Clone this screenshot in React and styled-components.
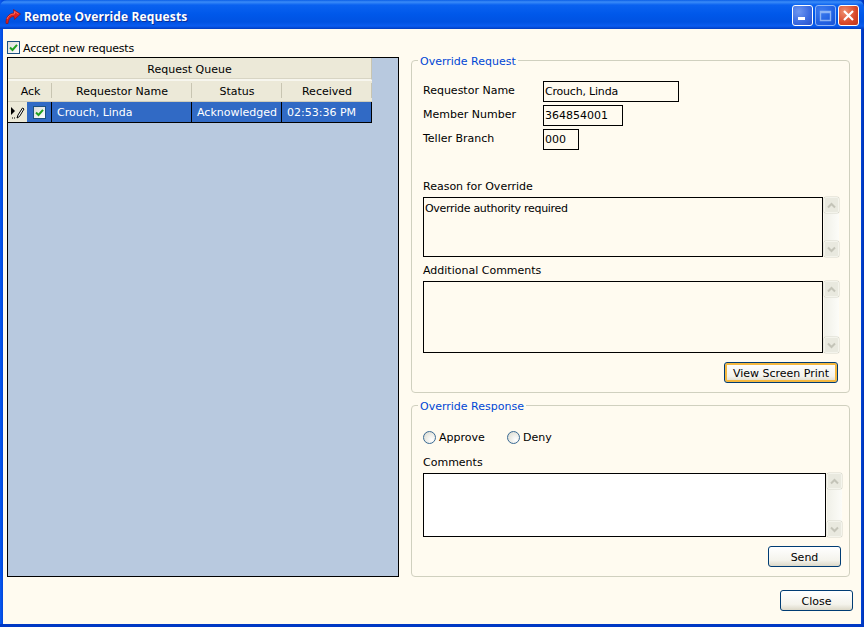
import React from "react";
import styled, { createGlobalStyle } from "styled-components";

const Global = createGlobalStyle`
  html, body { margin: 0; padding: 0; background: #0a4be0; }
  body { font-family: "DejaVu Sans", "Liberation Sans", sans-serif; font-size: 11px; color: #000; }
  * { box-sizing: border-box; }
`;

const Window = styled.div`
  width: 864px; height: 627px; display: flex; flex-direction: column; overflow: hidden;
  background: linear-gradient(90deg, #0a5af0 0, #0046dc 3px, #0046dc 861px, #0030b0 864px);
  border-bottom: 3px solid #0038c4;
`;
const TitleBar = styled.div`
  height: 29px; flex: none; display: flex; align-items: center; padding: 2px 5px 0 5px;
  border-radius: 7px 7px 0 0;
  background: linear-gradient(180deg, #0a5ee6 0, #3b8cf8 2px, #0a62f0 5px, #0058ea 14px, #0052e2 22px, #0a5cf0 26px, #003cc0 29px);
`;
const TitleText = styled.div`
  flex: 1; margin: 1px 0 0 3px; color: #fff; font-family: "Open Sans", "Liberation Sans", sans-serif;
  font-weight: 700; font-size: 12px; letter-spacing: 0.13px; text-shadow: 1px 1px 0 #0a2f9a;
`;
const CaptionButtons = styled.div`
  display: flex; gap: 2px; margin-top: -1px;
`;
const CaptionButton = styled.div`
  width: 21px; height: 21px; border: 1px solid #fff; border-radius: 3px;
  display: flex; align-items: center; justify-content: center;
  background: ${p => p.$red
    ? "radial-gradient(circle at 30% 30%, #f0906f, #d8482a 60%, #c0351a)"
    : "radial-gradient(circle at 30% 30%, #6f97f0, #3a6ae0 60%, #2a50c8)"};
  opacity: ${p => p.$dim ? 0.55 : 1};
`;
const Body = styled.div`
  flex: 1; min-height: 0; margin: 0 3px; background: #fffbf0;
  display: flex; flex-direction: column; padding: 11px 8px 13px 4px;
`;
const Columns = styled.div`
  display: flex; flex: 1; min-height: 0;
`;
const Left = styled.div`
  width: 392px; flex: none; display: flex; flex-direction: column;
`;
const Right = styled.div`
  width: 440px; margin-left: 12px; padding-top: 20px; display: flex; flex-direction: column; gap: 12px;
`;
const AcceptRow = styled.label`
  height: 17px; display: flex; align-items: flex-start; gap: 3px; padding-top: 1px; line-height: 16px; letter-spacing: -0.2px;
`;
const CheckBox = styled.span`
  width: 13px; height: 13px; flex: none; display: inline-flex; align-items: center; justify-content: center;
  border: 1px solid #1c5180; background: linear-gradient(135deg, #dcdcd7, #fff);
`;
const GridBox = styled.div`
  height: 520px; border: 1px solid #000; background: #b8c9df;
`;
const GridInner = styled.div`
  width: 364px;
`;
const Band = styled.div`
  height: 22px; background: #ece9d8; display: flex; align-items: center; justify-content: center;
  border-right: 1px solid #c8c5b2; border-bottom: 1px solid #f7f6ee; box-shadow: inset 0 -1px 0 #d8d5c4;
  padding-top: 2px;
`;
const HeadRow = styled.div`
  height: 22px; display: grid; grid-template-columns: 44px 140px 90px 90px; background: #ece9d8;
  border-top: 1px solid #f7f6ee; border-bottom: 1px solid #d0cdbb;
`;
const HeadCell = styled.div`
  display: flex; align-items: center; justify-content: center; padding-left: ${p => p.$pad || 0}px;
  position: relative;
  &::after { content: ""; position: absolute; right: 0; top: 2px; bottom: 3px; width: 1px; background: #c8c5b2; }
`;
const DataRow = styled.div`
  height: 21px; display: grid; grid-template-columns: 19px 25px 140px 90px 90px; background: #316ac5;
  border-bottom: 1px solid #000; color: #fff;
`;
const Selector = styled.div`
  background: #ece9d8; display: flex; align-items: center; justify-content: center;
`;
const DataCell = styled.div`
  display: flex; align-items: center; padding-left: ${p => p.$pad ?? 5}px; justify-content: ${p => p.$center ? "center" : "flex-start"};
  border-right: 1px solid #000; white-space: nowrap; overflow: hidden;
`;
const Group = styled.fieldset`
  margin: 0; width: 439px; height: ${p => p.$h}px; border: 1px solid #d0d0bf; border-radius: 4px; position: relative;
  padding: 0 0 0 11px; display: block;
`;
const Legend = styled.div`
  position: absolute; left: 6px; top: -6px; padding: 0 2px; background: #fffbf0; color: #0046d5; line-height: 13px;
`;
const Field = styled.div`
  display: grid; grid-template-columns: 120px auto; height: 24px; align-items: start; justify-content: start;
`;
const FieldLabel = styled.div`
  line-height: 17px; padding-top: 1px;
`;
const ValueBox = styled.div`
  width: ${p => p.$w}px; height: 21px; border: 1px solid #000; line-height: 19px; padding-left: 1px; white-space: nowrap;
  letter-spacing: ${p => p.$tight ? "-0.2px" : "0"};
`;
const Fields = styled.div`
  padding-top: 20px;
`;
const BlockLabel = styled.div`
  line-height: 14px; height: 14px; margin-top: ${p => p.$top}px; margin-bottom: 3px;
`;
const AreaRow = styled.div`
  display: flex; height: ${p => p.$h}px; gap: 1px;
`;
const Area = styled.div`
  width: ${p => p.$w}px; border: 1px solid #000; padding: 4px 1px; line-height: 13px; letter-spacing: -0.3px;
  background: ${p => p.$bg || "transparent"};
`;
const ScrollBar = styled.div`
  width: 15px; display: flex; flex-direction: column; justify-content: space-between;
  background: linear-gradient(90deg, #f0f0e8, #fcfcf8);
`;
const ScrollBtn = styled.div`
  height: 16px; display: flex; align-items: center; justify-content: center; background: #e9e9df;
  border: 1px solid #f4f4ec; border-radius: 2px; box-shadow: 0 0 0 0.5px #d8d8cc;
`;
const ButtonRow = styled.div`
  display: flex; justify-content: flex-end; padding-right: ${p => p.$right}px; margin-top: ${p => p.$top}px;
`;
const Btn = styled.div`
  width: ${p => p.$w}px; height: 21px; border: 1px solid #003c74; border-radius: 3px; padding-top: 2px;
  display: flex; align-items: center; justify-content: center;
  background: linear-gradient(180deg, #fff, #f4f3ec 70%, #dcd8c8);
  box-shadow: ${p => p.$focus ? "inset 0 0 0 2px #f4b840" : "none"};
`;
const RadioRow = styled.div`
  display: flex; align-items: center; height: 14px; margin-top: 24px;
`;
const RadioItem = styled.label`
  display: flex; align-items: center; gap: 3px; width: 84px;
`;
const Radio = styled.span`
  width: 13px; height: 13px; border-radius: 50%; border: 1px solid #3a6a94; flex: none;
  background: radial-gradient(circle at 70% 70%, #fff, #e4e4dc 70%, #c8c8bc);
`;
const Footer = styled.div`
  display: flex; justify-content: flex-end; margin-top: 13px;
`;

const Check = () => (
  <svg width="9" height="9" viewBox="0 0 9 9"><path d="M1 4.5 L3.5 7 L8 1.8" fill="none" stroke="#21a121" strokeWidth="2" /></svg>
);
const Chev = ({ up }) => (
  <svg width="9" height="7" viewBox="0 0 9 7"><path d={up ? "M1 5.5 L4.5 2 L8 5.5" : "M1 1.5 L4.5 5 L8 1.5"} fill="none" stroke="#c4c4b8" strokeWidth="2" /></svg>
);
const Scroll = () => (
  <ScrollBar>
    <ScrollBtn><Chev up /></ScrollBtn>
    <ScrollBtn><Chev /></ScrollBtn>
  </ScrollBar>
);

export default function App() {
  return (
    <Window>
      <Global />
      <TitleBar>
        <svg width="16" height="16" viewBox="0 0 16 16">
          <path d="M1 15.5 C0.5 10.5 3 5.5 9 5 L8.5 1.5 L15.5 6 L9.5 11.5 L9 8.5 C5.5 8.5 3.5 11 3 15.5 Z" fill="#e02020" stroke="#8a1010" strokeWidth="0.6" />
          <path d="M2 11 C3 8 5.5 6 9.5 6 L9.5 3.5 L13.5 6" fill="none" stroke="#ff7a6a" strokeWidth="0.8" />
        </svg>
        <TitleText>Remote Override Requests</TitleText>
        <CaptionButtons>
          <CaptionButton>
            <svg width="13" height="13" viewBox="0 0 13 13"><rect x="2" y="8" width="7" height="3" fill="#fff" /></svg>
          </CaptionButton>
          <CaptionButton $dim>
            <svg width="13" height="13" viewBox="0 0 13 13"><path d="M1.5 2.5h10v9h-10z M1.5 3.5h10" fill="none" stroke="#fff" strokeWidth="1.4" /></svg>
          </CaptionButton>
          <CaptionButton $red>
            <svg width="13" height="13" viewBox="0 0 13 13"><path d="M2 2 L11 11 M11 2 L2 11" stroke="#fff" strokeWidth="2.2" /></svg>
          </CaptionButton>
        </CaptionButtons>
      </TitleBar>
      <Body>
        <Columns>
          <Left>
            <AcceptRow><CheckBox><Check /></CheckBox>Accept new requests</AcceptRow>
            <GridBox>
              <GridInner>
                <Band>Request Queue</Band>
                <HeadRow>
                  <HeadCell $pad={1}>Ack</HeadCell>
                  <HeadCell>Requestor Name</HeadCell>
                  <HeadCell>Status</HeadCell>
                  <HeadCell>Received</HeadCell>
                </HeadRow>
                <DataRow>
                  <Selector>
                    <svg width="15" height="15" viewBox="0 0 15 15">
                      <path d="M1 2 L1 10 L5 6 Z" fill="#000" />
                      <path d="M8 10 L7 13 L9.5 11.5 L14 4 L12.5 3 Z" fill="#fff" stroke="#000" strokeWidth="1" />
                      <path d="M2 13h1M4 13h1" stroke="#000" />
                    </svg>
                  </Selector>
                  <DataCell $center $pad={0}><CheckBox><Check /></CheckBox></DataCell>
                  <DataCell>Crouch, Linda</DataCell>
                  <DataCell>Acknowledged</DataCell>
                  <DataCell>02:53:36 PM</DataCell>
                </DataRow>
              </GridInner>
            </GridBox>
          </Left>
          <Right>
            <Group $h={333}>
              <Legend>Override Request</Legend>
              <Fields>
                <Field><FieldLabel>Requestor Name</FieldLabel><ValueBox $w={136} $tight>Crouch, Linda</ValueBox></Field>
                <Field><FieldLabel>Member Number</FieldLabel><ValueBox $w={80}>364854001</ValueBox></Field>
                <Field><FieldLabel>Teller Branch</FieldLabel><ValueBox $w={36}>000</ValueBox></Field>
              </Fields>
              <BlockLabel $top={27}>Reason for Override</BlockLabel>
              <AreaRow $h={60}><Area $w={400}>Override authority required</Area><Scroll /></AreaRow>
              <BlockLabel $top={7}>Additional Comments</BlockLabel>
              <AreaRow $h={72}><Area $w={400} /><Scroll /></AreaRow>
              <ButtonRow $right={11} $top={9}><Btn $w={114} $focus>View Screen Print</Btn></ButtonRow>
            </Group>
            <Group $h={172}>
              <Legend>Override Response</Legend>
              <RadioRow>
                <RadioItem><Radio />Approve</RadioItem>
                <RadioItem><Radio />Deny</RadioItem>
              </RadioRow>
              <BlockLabel $top={12}>Comments</BlockLabel>
              <AreaRow $h={64}><Area $w={403} $bg="#fff" /><Scroll /></AreaRow>
              <ButtonRow $right={8} $top={9}><Btn $w={73}>Send</Btn></ButtonRow>
            </Group>
          </Right>
        </Columns>
        <Footer><Btn $w={73}>Close</Btn></Footer>
      </Body>
    </Window>
  );
}
